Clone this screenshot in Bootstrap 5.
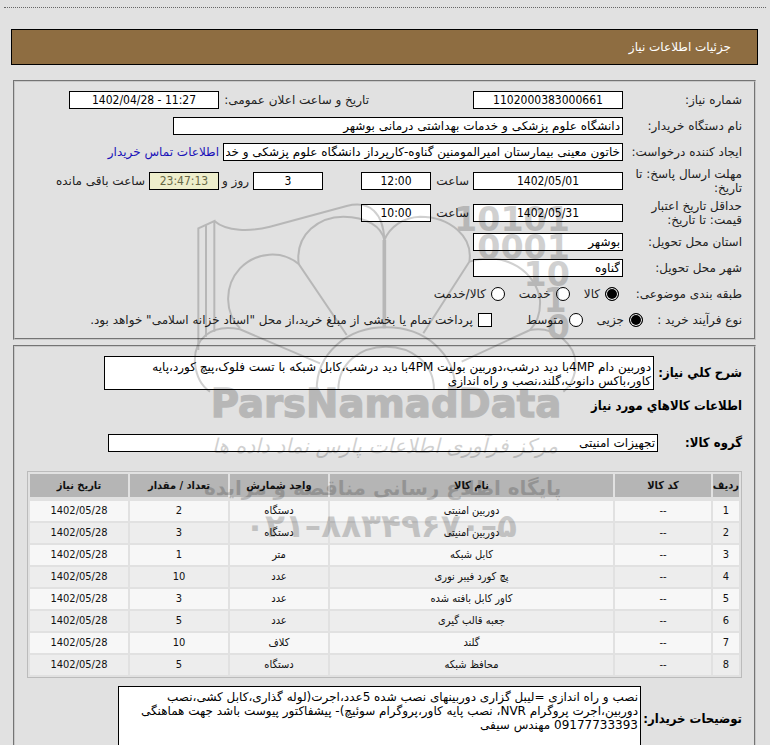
<!DOCTYPE html>
<html lang="fa" dir="rtl">
<head>
    <meta charset="UTF-8">
    <meta name="viewport" content="width=device-width, initial-scale=1.0">
    <title>جزئیات اطلاعات نیاز</title>
    <link href="https://cdn.jsdelivr.net/npm/bootstrap@5.3.0/dist/css/bootstrap.min.css" rel="stylesheet">
    <script src="https://cdn.jsdelivr.net/npm/bootstrap@5.3.0/dist/js/bootstrap.bundle.min.js"></script>
    <style>
        body {
            background-color: #e1e1e1;
            color: #222;
            font-family: "DejaVu Sans", sans-serif;
            font-size: 12px;
            line-height: 14px;
        }
        .top-rule {
            border-top: 1px dotted #666;
            margin: 7px 4px 21px;
        }
        .title-bar {
            background: #8e6d41;
            border: 1px solid #000;
            color: #fff;
            height: 36px;
            margin: 0 12px 15px 11px;
            padding: 0 26px;
        }
        .panel {
            border: 2px groove #c8c8c8;
            margin: 0 14px 5px 13px;
            padding: 5px 12px;
        }
        .line {
            display: flex;
            align-items: center;
            gap: 4px;
            min-height: 26px;
        }
        .line-tall {
            min-height: 32px;
        }
        .caption {
            width: 115px;
            flex: none;
        }
        .caption-mid {
            width: 95px;
        }
        .caption-bold {
            width: 84px;
            flex: none;
        }
        .caption-group {
            width: 80px;
        }
        .caption-notes {
            width: 97px;
        }
        .caption-bold, .goods-title {
            font-family: "DejaVu Sans Condensed", "DejaVu Sans", sans-serif;
            font-size: 13px;
            font-weight: bold;
            color: #000;
        }
        .goods-title {
            min-height: 32px;
        }
        .field {
            border: 1px solid #000;
            border-radius: 0;
            background: #fff;
            color: #000;
            height: 18px;
            padding: 0 2px;
            font-size: 12px;
            line-height: 14px;
            flex: none;
        }
        .num, .time {
            font-family: "DejaVu Sans Condensed", "DejaVu Sans", sans-serif;
            text-align: center;
        }
        .num {
            width: 150px;
        }
        .time {
            width: 70px;
        }
        .hour-label {
            width: 34px;
        }
        .day-label {
            width: 26px;
        }
        .left-time {
            background: #eeeecc;
            color: #666644;
        }
        .w-org {
            width: 450px;
        }
        .w-person {
            width: 400px;
        }
        .w-place {
            width: 150px;
        }
        .w-wide {
            width: 550px;
        }
        .second-col {
            margin-right: 100px;
        }
        .second-col label {
            width: 146px;
            white-space: nowrap;
        }
        .rest {
            margin-right: 34px;
        }
        .contact {
            color: #1a12b8;
            text-decoration: none;
        }
        .pick {
            appearance: none;
            width: 14px;
            height: 14px;
            margin: 0;
            border: 1px solid #000;
            background: #fff;
            flex: none;
        }
        .pick[type="radio"] {
            border-radius: 50%;
        }
        .pick[type="radio"]:checked {
            background: #000;
            box-shadow: inset 0 0 0 1px #fff;
        }
        .choices {
            display: flex;
            gap: 14px;
        }
        .choice {
            display: flex;
            align-items: center;
            gap: 5px;
            white-space: nowrap;
        }
        .choice-pay {
            margin-right: 20px;
        }
        .memo {
            height: 34px;
            padding: 3px 2px;
            resize: none;
            overflow: hidden;
        }
        .w-notes {
            width: 523px;
            height: 66px;
        }
        .goods {
            width: 100%;
            border: 1px solid #bbb;
            border-collapse: separate;
            border-spacing: 2px;
            table-layout: fixed;
            font-family: "DejaVu Sans Condensed", "DejaVu Sans", sans-serif;
            font-size: 11px;
            text-align: center;
            color: #111;
            margin: 15px 0 8px;
        }
        .goods th {
            height: 25px;
            padding: 0;
            background: #b5b5b5;
            background-clip: padding-box;
            border-bottom: 2px solid transparent;
        }
        .goods td {
            height: 20px;
            padding: 0;
            background: #f7f7f7;
        }
        .goods tbody tr:nth-child(even) td {
            background: #ededed;
        }
        .goods .col-row {
            width: 26px;
        }
        .goods .col-code {
            width: 96px;
        }
        .goods .col-unit, .goods .col-date {
            width: 98px;
        }
        .watermark {
            position: absolute;
            top: 190px;
            left: 190px;
            width: 390px;
            height: 360px;
            opacity: .18;
            pointer-events: none;
        }
    </style>
</head>
<body class="position-relative">
    <div class="top-rule"></div>
    <div class="title-bar d-flex align-items-center">جزئیات اطلاعات نیاز</div>

    <!-- Need details -->
    <form class="panel">
        <div class="line">
            <label class="caption" for="needNo">شماره نیاز:</label>
            <input class="field num" id="needNo" value="1102000383000661" readonly>
            <div class="second-col d-flex align-items-center gap-1">
                <label for="announced">تاریخ و ساعت اعلان عمومی:</label>
                <input class="field num" id="announced" dir="ltr" value="1402/04/28 - 11:27" readonly>
            </div>
        </div>
        <div class="line">
            <label class="caption" for="org">نام دستگاه خریدار:</label>
            <input class="field w-org" id="org" value="دانشگاه علوم پزشکی و خدمات بهداشتی درمانی بوشهر" readonly>
        </div>
        <div class="line">
            <label class="caption text-nowrap" for="person">ایجاد کننده درخواست:</label>
            <input class="field w-person" id="person" value="خاتون معینی بیمارستان امیرالمومنین گناوه-کارپرداز دانشگاه علوم پزشکی و خدمات بهداشتی درمانی بوشهر" readonly>
            <a class="contact" href="#">اطلاعات تماس خریدار</a>
        </div>
        <div class="line line-tall">
            <label class="caption" for="deadline">مهلت ارسال پاسخ: تا تاریخ:</label>
            <input class="field num" id="deadline" value="1402/05/01" readonly>
            <label class="hour-label" for="deadlineTime">ساعت</label>
            <input class="field time" id="deadlineTime" value="12:00" readonly>
            <div class="rest d-flex align-items-center gap-1">
                <input class="field time" id="days" value="3" readonly>
                <label class="day-label text-nowrap" for="days">روز و</label>
                <input class="field time left-time" id="remain" value="23:47:13" readonly>
                <label for="remain">ساعت باقی مانده</label>
            </div>
        </div>
        <div class="line line-tall">
            <label class="caption" for="valid">حداقل تاریخ اعتبار قیمت: تا تاریخ:</label>
            <input class="field num" id="valid" value="1402/05/31" readonly>
            <label class="hour-label" for="validTime">ساعت</label>
            <input class="field time" id="validTime" value="10:00" readonly>
        </div>
        <div class="line">
            <label class="caption" for="province">استان محل تحویل:</label>
            <input class="field w-place" id="province" value="بوشهر" readonly>
        </div>
        <div class="line">
            <label class="caption" for="city">شهر محل تحویل:</label>
            <input class="field w-place" id="city" value="گناوه" readonly>
        </div>
        <div class="line">
            <span class="caption">طبقه بندی موضوعی:</span>
            <div class="choices pe-1">
                <div class="choice">
                    <input class="pick" type="radio" name="kind" id="kindGoods" checked>
                    <label for="kindGoods">کالا</label>
                </div>
                <div class="choice">
                    <input class="pick" type="radio" name="kind" id="kindService">
                    <label for="kindService">خدمت</label>
                </div>
                <div class="choice">
                    <input class="pick" type="radio" name="kind" id="kindBoth">
                    <label for="kindBoth">کالا/خدمت</label>
                </div>
            </div>
        </div>
        <div class="line">
            <span class="caption caption-mid">نوع فرآیند خرید :</span>
            <div class="choices">
                <div class="choice">
                    <input class="pick" type="radio" name="process" id="procSmall" checked>
                    <label for="procSmall">جزیی</label>
                </div>
                <div class="choice">
                    <input class="pick" type="radio" name="process" id="procMid">
                    <label for="procMid">متوسط</label>
                </div>
                <div class="choice choice-pay">
                    <input class="pick" type="checkbox" id="treasury">
                    <label for="treasury">پرداخت تمام یا بخشی از مبلغ خرید،از محل "اسناد خزانه اسلامی" خواهد بود.</label>
                </div>
            </div>
        </div>
    </form>

    <!-- Goods details -->
    <form class="panel">
        <div class="line mt-1">
            <label class="caption-bold" for="desc">شرح کلي نیاز:</label>
            <textarea class="field memo w-wide" id="desc" readonly>دوربین دام 4MPبا دید درشب،دوربین بولیت 4PMبا دید درشب،کابل شبکه با تست فلوک،پیچ کورد،پایه کاور،باکس دانوب،گلند،نصب و راه اندازی</textarea>
        </div>
        <div class="line goods-title">اطلاعات کالاهاي مورد نیاز</div>
        <div class="line mt-2">
            <label class="caption-bold caption-group" for="group">گروه کالا:</label>
            <input class="field w-wide" id="group" value="تجهیزات امنیتی" readonly>
        </div>
        <table class="goods">
            <thead>
                <tr>
                    <th class="col-row">ردیف</th>
                    <th class="col-code">کد کالا</th>
                    <th>نام کالا</th>
                    <th class="col-unit">واحد شمارش</th>
                    <th class="col-unit">تعداد / مقدار</th>
                    <th class="col-date">تاریخ نیاز</th>
                </tr>
            </thead>
            <tbody>
                <tr><td>1</td><td>--</td><td>دوربین امنیتی</td><td>دستگاه</td><td>2</td><td>1402/05/28</td></tr>
                <tr><td>2</td><td>--</td><td>دوربین امنیتی</td><td>دستگاه</td><td>3</td><td>1402/05/28</td></tr>
                <tr><td>3</td><td>--</td><td>کابل شبکه</td><td>متر</td><td>1</td><td>1402/05/28</td></tr>
                <tr><td>4</td><td>--</td><td>پچ کورد فیبر نوری</td><td>عدد</td><td>10</td><td>1402/05/28</td></tr>
                <tr><td>5</td><td>--</td><td>کاور کابل بافته شده</td><td>عدد</td><td>3</td><td>1402/05/28</td></tr>
                <tr><td>6</td><td>--</td><td>جعبه قالب گیری</td><td>عدد</td><td>5</td><td>1402/05/28</td></tr>
                <tr><td>7</td><td>--</td><td>گلند</td><td>کلاف</td><td>10</td><td>1402/05/28</td></tr>
                <tr><td>8</td><td>--</td><td>محافظ شبکه</td><td>دستگاه</td><td>5</td><td>1402/05/28</td></tr>
            </tbody>
        </table>
        <div class="line">
            <label class="caption-bold caption-notes text-nowrap" for="notes">توضیحات خریدار:</label>
            <textarea class="field memo w-notes" id="notes" readonly>نصب و راه اندازی =لیبل گزاری دوربینهای نصب شده 5عدد،اجرت(لوله گذاری،کابل کشی،نصب دوربین،اجرت پروگرام NVR، نصب پایه کاور،پروگرام سوئیچ)- پیشفاکتور پیوست باشد جهت هماهنگی 09177733393 مهندس سیفی</textarea>
        </div>
    </form>

    <!-- Watermark over the page -->
    <svg class="watermark" viewBox="0 0 1170 1080" direction="ltr" font-family="DejaVu Sans, sans-serif" fill="#000">
        <g fill="none" stroke="#000" stroke-width="6">
            <path d="M25 480V115L73 93V425M48 104V440"/>
            <path d="M73 93C110 125 180 125 240 110L470 48C540 30 580 70 583 150"/>
            <path d="M583 150V415" stroke-width="11"/>
            <path d="M150 415C105 370 100 290 150 235C200 185 275 180 326 222L470 435"/>
            <path d="M326 222C315 130 390 80 460 80C530 80 575 110 583 150C600 110 640 82 690 80C780 80 850 140 838 215L700 430"/>
            <path d="M838 215C950 180 1040 250 1050 330C1052 370 1040 400 1020 420"/>
            <path d="M390 520L150 418C60 400 10 450 15 520C20 570 45 595 60 605"/>
            <path d="M815 515L1020 420C1100 405 1155 470 1157 520C1157 560 1140 590 1120 605"/>
            <path d="M380 600C380 490 470 412 588 412C706 412 796 490 796 600"/>
            <path d="M445 600C445 520 510 470 588 470C666 470 732 520 732 600"/>
        </g>
        <g font-weight="bold" font-size="100" text-anchor="end">
            <text x="1140" y="122">10101</text>
            <text x="1140" y="206">0001</text>
            <text x="1140" y="288">10</text>
            <text x="1130" y="366">1</text>
            <text x="1140" y="446">0</text>
        </g>
        <g text-anchor="middle">
            <text x="588" y="680" font-size="116" font-weight="bold" stroke="#000" stroke-width="4">ParsNamadData</text>
            <text x="585" y="790" font-size="61" font-style="italic">مرکز فرآوری اطلاعات پارس نماد داده ها</text>
            <text x="578" y="914" font-size="60" font-weight="bold">پایگاه اطلاع رسانی مناقصه و مزایده</text>
            <text x="573" y="1042" font-size="98" font-weight="bold">۰۲۱–۸۸۳۴۹۶۷۰–۵</text>
        </g>
    </svg>
</body>
</html>
